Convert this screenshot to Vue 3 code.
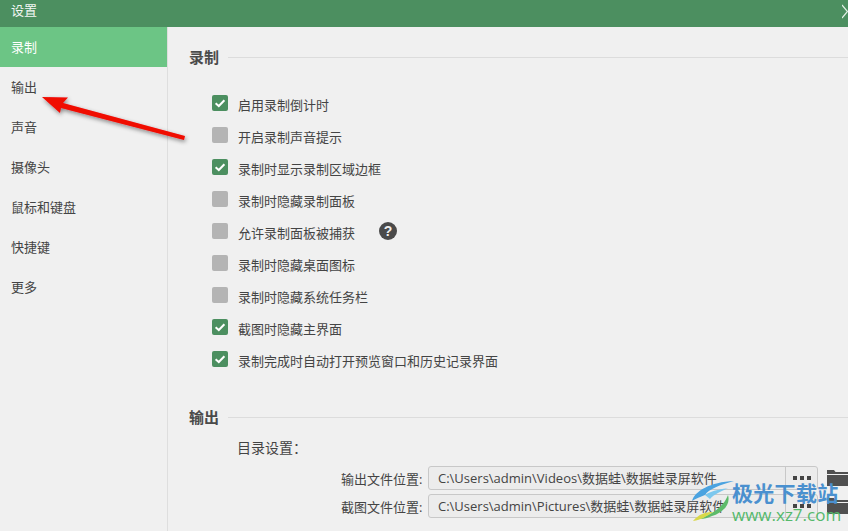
<template>
  <div class="window">
    <div class="titlebar">
      <span class="title">设置</span>
      <svg class="close" width="6" height="16" viewBox="0 0 6 16">
        <path d="M0 1 L5.5 7.5 L0 14" fill="none" stroke="#e4f0e7" stroke-width="1.2" />
      </svg>
    </div>
    <div class="body">
      <div class="sidebar">
        <div
          v-for="(item, i) in menu"
          :key="item"
          class="menu-item"
          :class="{ active: i === 0 }"
        >
          {{ item }}
        </div>
      </div>
      <div class="content">
        <div class="section-head first">
          <span class="section-title">录制</span>
          <span class="section-line"></span>
        </div>
        <div class="options">
          <div v-for="opt in options" :key="opt.label" class="option">
            <span class="check" :class="{ on: opt.on }">
              <svg v-if="opt.on" width="16" height="16" viewBox="0 0 16 16">
                <path d="M3.6 8.2 L6.8 11 L12.4 5.2" fill="none" stroke="#fff" stroke-width="2" />
              </svg>
            </span>
            <span class="option-label">{{ opt.label }}</span>
            <span v-if="opt.help" class="help">?</span>
          </div>
        </div>
        <div class="section-head second">
          <span class="section-title">输出</span>
          <span class="section-line"></span>
        </div>
        <div class="dir-title">目录设置：</div>
        <div class="paths">
          <div v-for="p in paths" :key="p.label" class="path-row">
            <span class="path-label">{{ p.label }}</span>
            <div class="path-box">
              <span class="path-text">{{ p.value }}</span>
              <span class="path-btn">
                <i></i><i></i><i></i>
              </span>
            </div>
            <svg class="folder" width="21" height="16" viewBox="0 0 21 16">
              <path d="M0 0 H7 L8.5 2 H21 V4 H0 Z M0 5 H21 V16 H0 Z" fill="#505050" />
            </svg>
          </div>
        </div>
      </div>
    </div>

    <svg class="arrow" width="190" height="70" viewBox="0 0 190 70">
      <defs>
        <filter id="arrow-shadow" x="-10%" y="-30%" width="120%" height="170%">
          <feDropShadow dx="1" dy="2" stdDeviation="2" flood-color="#000" flood-opacity="0.45" />
        </filter>
      </defs>
      <path
        d="M42 4 L68 4.5 L63 10 L185 43 L184 47 L61 15 L60 20 Z"
        fill="#f00806"
        filter="url(#arrow-shadow)"
      />
    </svg>

    <div class="watermark">
      <svg class="wm-logo" width="44" height="40" viewBox="0 0 44 40">
        <path d="M0 20 C3 10 18 1 42 0 C28 4 17 8 13 14 C8 16 3 18 0 20 Z" fill="#4ba3e0" />
        <path d="M13 14 C20 9 32 8 36 7 C28 11 22 13 18 18 Z" fill="#7cc8ee" />
        <path d="M8 38 C16 34 31 28 36 14 C39 24 30 32 20 35 C16 37 12 38 8 38 Z" fill="#5dbb6a" />
        <path d="M1 40 C7 33 13 31 21 31 C15 35 9 39 1 40 Z" fill="#d8d84a" />
      </svg>
      <div class="wm-text">
        <div class="wm-cn">极光下载站</div>
        <div class="wm-en">www.xz7.com</div>
      </div>
    </div>
  </div>
</template>

<script setup>
const menu = ["录制", "输出", "声音", "摄像头", "鼠标和键盘", "快捷键", "更多"];

const options = [
  { label: "启用录制倒计时", on: true },
  { label: "开启录制声音提示", on: false },
  { label: "录制时显示录制区域边框", on: true },
  { label: "录制时隐藏录制面板", on: false },
  { label: "允许录制面板被捕获", on: false, help: true },
  { label: "录制时隐藏桌面图标", on: false },
  { label: "录制时隐藏系统任务栏", on: false },
  { label: "截图时隐藏主界面", on: true },
  { label: "录制完成时自动打开预览窗口和历史记录界面", on: true },
];

const paths = [
  { label: "输出文件位置:", value: "C:\\Users\\admin\\Videos\\数据蛙\\数据蛙录屏软件" },
  { label: "截图文件位置:", value: "C:\\Users\\admin\\Pictures\\数据蛙\\数据蛙录屏软件" },
];
</script>

<style>
html,
body {
  margin: 0;
  overflow: hidden;
}
</style>

<style scoped>
.window {
  position: relative;
  width: 848px;
  height: 531px;
  overflow: hidden;
  background: #f0f0f0;
  color: #444;
  font-family: "Open Sans", "Noto Sans CJK SC", sans-serif;
  font-size: 13px;
}
.titlebar {
  display: flex;
  align-items: center;
  justify-content: space-between;
  height: 27px;
  padding: 0 0 7px 11px;
  box-sizing: border-box;
  background: #4c8f60;
  color: #f2f7f3;
}
.title {
  line-height: 20px;
}
.close {
  margin-top: 4px;
}
.body {
  display: flex;
  height: 504px;
}
.sidebar {
  width: 167px;
  flex: none;
  border-right: 1px solid #dedede;
}
.menu-item {
  height: 40px;
  line-height: 41px;
  padding-left: 11px;
  color: #444;
}
.menu-item.active {
  background: #6cc585;
  color: #fff;
}
.content {
  flex: 1;
  padding-left: 21px;
}
.section-head {
  display: flex;
  align-items: center;
  height: 22px;
}
.section-head.first {
  margin-top: 19px;
}
.section-head.second {
  margin-top: 31px;
}
.section-title {
  font-size: 15px;
  font-weight: 700;
  color: #4a4a4a;
  line-height: 22px;
}
.section-line {
  flex: 1;
  height: 1px;
  margin-left: 9px;
  background: #dcdcdc;
}
.options {
  margin-top: 19px;
  padding-left: 23px;
}
.option {
  display: flex;
  align-items: center;
  height: 32px;
}
.check {
  width: 16px;
  height: 16px;
  border-radius: 2px;
  background: #b4b4b4;
  flex: none;
}
.check.on {
  background: #4c8f60;
}
.check svg {
  display: block;
}
.option-label {
  margin-left: 10px;
  margin-top: 2px;
}
.help {
  width: 18px;
  height: 18px;
  margin-left: 24px;
  border-radius: 50%;
  background: #4a4a4a;
  color: #f0f0f0;
  font-family: "Liberation Sans", sans-serif;
  font-weight: 700;
  font-size: 14px;
  line-height: 18px;
  text-align: center;
}
.dir-title {
  margin: 9px 0 0 48px;
  font-size: 14px;
  line-height: 22px;
}
.paths {
  margin-top: 5px;
  padding-left: 152px;
}
.path-row {
  display: flex;
  align-items: center;
  height: 28px;
}
.path-label {
  width: 87px;
  flex: none;
  font-size: 13px;
  white-space: nowrap;
}
.path-box {
  display: flex;
  width: 390px;
  height: 24px;
  flex: none;
  box-sizing: border-box;
  border: 1px solid #c8c8c8;
  border-radius: 3px;
  background: #ececec;
}
.path-text {
  flex: 1;
  padding-left: 9px;
  line-height: 23px;
  white-space: nowrap;
  overflow: hidden;
}
.path-btn {
  display: flex;
  align-items: flex-start;
  justify-content: center;
  gap: 3px;
  width: 32px;
  flex: none;
  box-sizing: border-box;
  padding-top: 9px;
  border-left: 1px solid #c8c8c8;
}
.path-btn i {
  width: 4px;
  height: 4px;
  background: #444;
}
.folder {
  margin-left: 9px;
  flex: none;
}
.arrow {
  position: absolute;
  left: 0;
  top: 93px;
  pointer-events: none;
}
.watermark {
  position: absolute;
  left: 692px;
  top: 481px;
  display: flex;
  pointer-events: none;
}
.wm-logo {
  flex: none;
}
.wm-text {
  margin-left: -4px;
}
.wm-cn {
  font-size: 21px;
  font-weight: 700;
  line-height: 24px;
  letter-spacing: 0.3px;
  color: #4a90cf;
  white-space: nowrap;
}
.wm-en {
  font-size: 17px;
  line-height: 20px;
  color: #55b96c;
  white-space: nowrap;
}
</style>
